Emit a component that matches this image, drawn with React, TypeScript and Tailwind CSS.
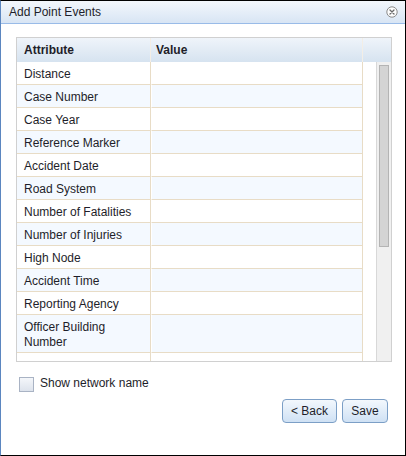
import { FC } from 'react';

const fields = [
    'Distance',
    'Case Number',
    'Case Year',
    'Reference Marker',
    'Accident Date',
    'Road System',
    'Number of Fatalities',
    'Number of Injuries',
    'High Node',
    'Accident Time',
    'Reporting Agency',
    'Officer Building Number',
    '',
];

const CloseIcon: FC = () => (
    <svg width="12" height="12" viewBox="0 0 12 12" aria-hidden={true}>
        <circle cx="6" cy="6" r="5.2" fill="#fdfdfd" stroke="#8a8a8a" strokeWidth="1" />
        <path d="M4 4 L8 8 M8 4 L4 8" stroke="#6a6a6a" strokeWidth="1.3" strokeLinecap="round" />
    </svg>
);

const AttributeRow: FC<{ name: string; index: number }> = ({ name, index }) => {
    const bg = index % 2 === 1 ? 'bg-[#f4f9ff]' : 'bg-white';
    return (
        <div className="flex">
            <div className={`min-h-[23px] w-[134px] shrink-0 border-r border-b border-[#e8dcc6] pt-[5px] pb-[2px] pl-[7px] pr-[4px] leading-[15px] ${bg}`}>
                {name}
            </div>
            <div className={`w-[212px] shrink-0 border-l border-l-white border-r border-b border-r-[#e8dcc6] border-b-[#e8dcc6] ${bg}`} />
        </div>
    );
};

export default function App() {
    return (
        <div className="flex h-[456px] w-[406px] flex-col border border-black border-l-[#5b86c0] bg-white font-['Liberation_Sans',Arial,sans-serif] text-[12px] text-[#1e1e2a]">
            {/* title bar */}
            <div className="flex h-[23px] shrink-0 items-center justify-between border-b border-[#99bbe8] bg-gradient-to-b from-[#f3f7fc] to-[#d8e5f4] pb-px pl-[8px] pr-[7px]">
                <span className="leading-none">Add Point Events</span>
                <CloseIcon />
            </div>

            <div className="flex flex-1 flex-col pl-[15px] pr-[13px] pt-[13px]">
                {/* attribute grid */}
                <div className="flex h-[325px] flex-col overflow-hidden border border-[#d0d0d0]">
                    <div className="flex h-[24px] shrink-0 bg-gradient-to-b from-[#eff4fa] to-[#d6e3f0] font-bold">
                        <div className="flex w-[134px] items-center border-r border-[#f3eee6] pl-[7px]">Attribute</div>
                        <div className="flex w-[212px] items-center border-r border-[#f3eee6] pl-[5px]">Value</div>
                        <div className="flex-1" />
                    </div>
                    <div className="flex min-h-0 flex-1">
                        <div className="w-[346px] shrink-0 overflow-hidden">
                            {fields.map((f, i) => (
                                <AttributeRow key={i} name={f} index={i} />
                            ))}
                        </div>
                        <div className="w-[13px] shrink-0" />
                        <div className="flex-1 border-l border-[#d8d8d8] bg-[#f0f0f0] pl-[2px] pt-[3px]">
                            <div className="h-[182px] w-[10px] border border-[#b4b4b4] bg-[#d4d4d4]" />
                        </div>
                    </div>
                </div>

                <label className="mt-[13px] flex items-center">
                    <span className="ml-[3px] h-[15px] w-[15px] border border-[#a9b3c4] bg-gradient-to-b from-[#f4f6fa] to-[#dde3ec]" />
                    <span className="ml-[6px] -translate-y-px">Show network name</span>
                </label>

                <div className="mr-[4px] mt-[6px] flex justify-end gap-[5px]">
                    <button className="h-[24px] w-[55px] rounded-[4px] border border-[#7c9fc6] bg-gradient-to-b from-[#f3f8fd] to-[#cfe1f4] text-[12px] text-[#1e1e2a]">
                        &lt; Back
                    </button>
                    <button className="h-[24px] w-[46px] rounded-[4px] border border-[#7c9fc6] bg-gradient-to-b from-[#f3f8fd] to-[#cfe1f4] text-[12px] text-[#1e1e2a]">
                        Save
                    </button>
                </div>
            </div>
        </div>
    );
}
